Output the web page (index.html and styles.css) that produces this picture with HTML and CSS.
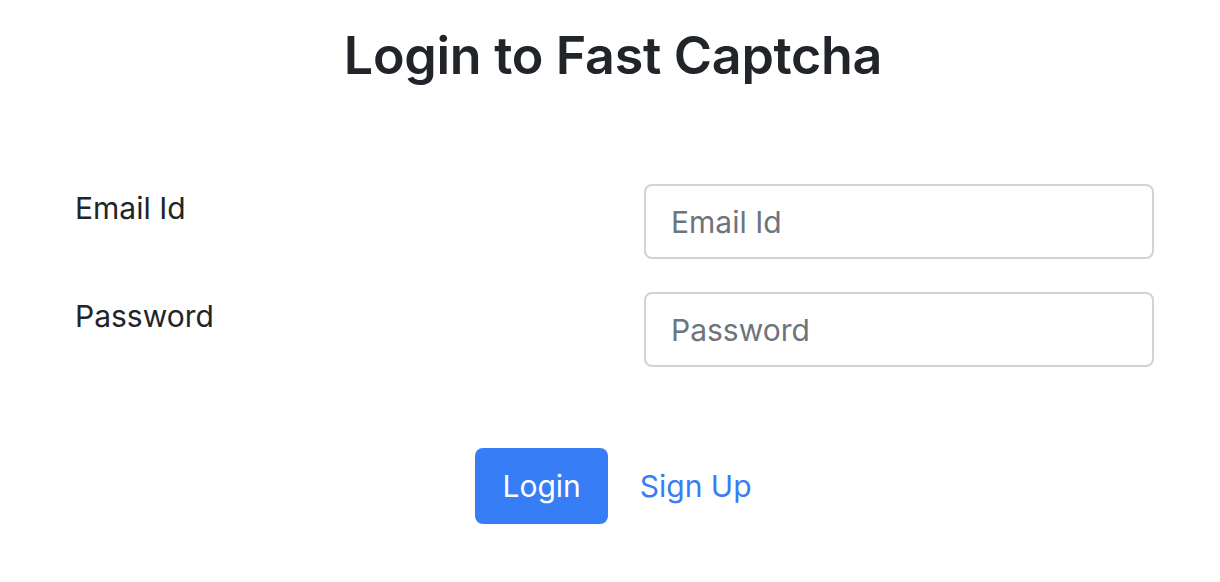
FILE: index.html
```html
<!DOCTYPE html>
<html lang="en">
<head>
<meta charset="utf-8">
<title>Login to Fast Captcha</title>
<link rel="stylesheet" href="styles.css">
</head>
<body>
  <main class="page">
    <h1 class="title">Login to Fast Captcha</h1>
    <form class="login-form">
      <div class="form-row">
        <label class="form-label" for="email">Email Id</label>
        <input class="form-control" id="email" type="email" placeholder="Email Id">
      </div>
      <div class="form-row">
        <label class="form-label" for="password">Password</label>
        <input class="form-control" id="password" type="password" placeholder="Password">
      </div>
      <div class="actions">
        <button class="btn-primary" type="button">Login</button>
        <a class="link" href="#">Sign Up</a>
      </div>
    </form>
  </main>
</body>
</html>
```

FILE: styles.css
```css
* { box-sizing: border-box; }

html, body {
  margin: 0;
  background: #ffffff;
}

body {
  font-family: Inter, "Noto Sans", "Liberation Sans", sans-serif;
  color: #212529;
  font-size: 30px;
  line-height: 1.5;
}

.page {
  padding-top: 25px;
}

.title {
  margin: 0;
  text-align: center;
  font-size: 52px;
  font-weight: 600;
  line-height: 1.2;
  letter-spacing: -0.3px;
  padding-left: 6px;
}

.login-form {
  margin-top: 97px;
  padding: 0 66px 0 75px;
}

.form-row {
  display: grid;
  grid-template-columns: 1fr 510px;
  align-items: start;
  margin-bottom: 33px;
}

.form-label {
  font-size: 30px;
  line-height: 48px;
}

.form-control {
  height: 75px;
  width: 100%;
  padding: 0 25px;
  border: 2px solid #ced4da;
  border-radius: 8px;
  font-family: inherit;
  font-size: 30px;
  color: #212529;
  background: #fff;
  outline: none;
}

.form-control::placeholder {
  color: #6c757d;
}

.actions {
  display: flex;
  justify-content: center;
  align-items: center;
  gap: 32px;
  margin-top: 81px;
  padding-right: 2px;
}

.btn-primary {
  height: 76px;
  padding: 0 27px;
  border: none;
  border-radius: 8px;
  background: #377df6;
  color: #ffffff;
  font-family: inherit;
  font-size: 30px;
}

.link {
  color: #377df6;
  text-decoration: none;
  font-size: 30px;
}
```
